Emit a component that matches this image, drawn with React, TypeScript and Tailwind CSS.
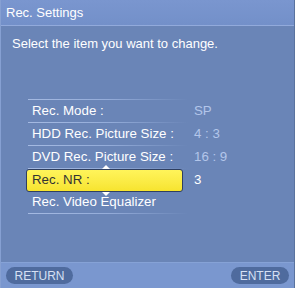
const rows = [
  { label: "Rec. Mode :", value: "SP" },
  { label: "HDD Rec. Picture Size :", value: "4 : 3" },
  { label: "DVD Rec. Picture Size :", value: "16 : 9" },
  { label: "Rec. NR :", value: "3", active: true },
  { label: "Rec. Video Equalizer", value: "" },
];

function Separator() {
  return (
    <div className="h-px ml-[27px] w-[160px] bg-gradient-to-r from-[#a5bae2] via-[#94acd9] to-transparent" />
  );
}

export default function App() {
  return (
    <div
      className="w-[295px] h-[288px] flex flex-col bg-[#6a85b7] border-l border-[#86a0d2] border-r border-r-[#5a739f] text-[13px] leading-none"
      style={{ fontFamily: '"Liberation Sans", Arial, sans-serif' }}
    >
      {/* title */}
      <div className="h-[26px] shrink-0 flex items-center pl-[5px] bg-gradient-to-b from-[#7a96cf] to-[#7390c9] border-b border-[#92aadb] text-white">
        Rec. Settings
      </div>

      <div className="pl-[11px] pt-[11px] text-white">Select the item you want to change.</div>

      {/* menu */}
      <div className="mt-[49px] flex flex-col text-[13.3px]">
        <Separator />
        {rows.map((r) => (
          <div key={r.label} className="flex flex-col">
            <div className="h-[22px] flex items-center">
              {r.active ? (
                <div className="relative ml-[25px] w-[157px] h-[23px] -my-[1px] flex items-center pl-[5px] rounded-[3px] border border-[#2f3f60] bg-gradient-to-b from-[#fff45a] to-[#f7e42e] text-[#333]">
                  Rec. NR :
                  <span className="absolute left-[75px] -top-[5px] w-0 h-0 border-x-[4px] border-x-transparent border-b-[4px] border-b-white" />
                  <span className="absolute left-[75px] -bottom-[5px] w-0 h-0 border-x-[4px] border-x-transparent border-t-[4px] border-t-white" />
                </div>
              ) : (
                <div className="ml-[31px] w-[151px] text-white">{r.label}</div>
              )}
              <div
                className={
                  "ml-[11px] " + (r.active ? "text-white" : "text-[#b3c6ea]")
                }
              >
                {r.value}
              </div>
            </div>
            {!r.active && <Separator />}
          </div>
        ))}
      </div>

      {/* bottom bar */}
      <div className="mt-auto h-[26px] shrink-0 flex items-center justify-between px-[5px] bg-[#7a97cf] border-t border-[#86a2d6]">
        <div className="h-[17px] w-[67px] rounded-full bg-[#4f6b9e] text-[#d6e0f4] flex items-center justify-center text-[12px]">
          RETURN
        </div>
        <div className="h-[17px] w-[58px] rounded-full bg-[#4f6b9e] text-[#d6e0f4] flex items-center justify-center text-[12px]">
          ENTER
        </div>
      </div>
    </div>
  );
}
